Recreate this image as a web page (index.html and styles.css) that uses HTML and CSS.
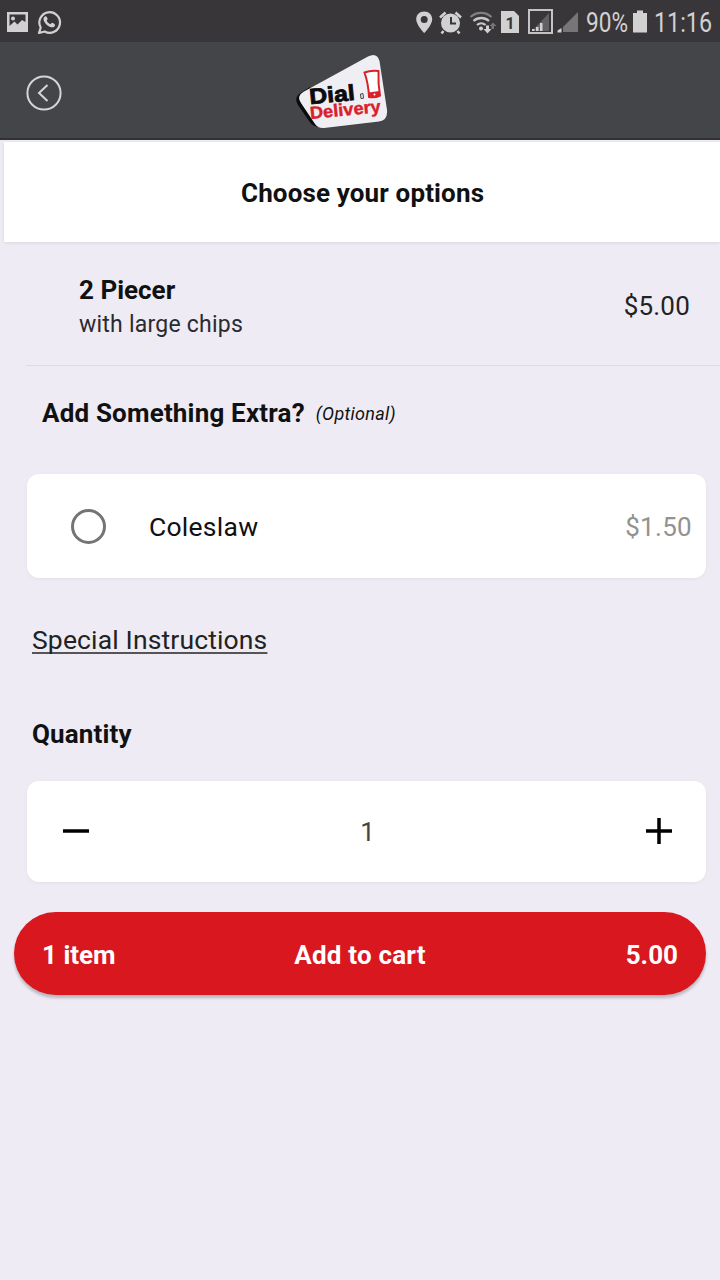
FILE: index.html
```html
<!DOCTYPE html>
<html lang="en">
<head>
<meta charset="utf-8">
<title>Choose your options</title>
<link rel="stylesheet" href="styles.css">
</head>
<body>
<div class="status">
  <svg class="notices" width="62" height="42" viewBox="0 0 62 42">
    <path fill="#d2d1d2" fill-rule="evenodd" d="M7 12h21v20H7zM9.500 14.500v11.500l5-4.500 3 3 4.500-4.500 3.500 2v-7.500z"/>
    <circle cx="13" cy="18.500" r="2" fill="#d2d1d2"/>
    <path d="M39 33l1.700-5.500a10.300 10.300 0 1 1 4 4z" fill="none" stroke="#d2d1d2" stroke-width="2.200" stroke-linejoin="round"/>
    <path d="M45 16.500c-3 1.500-1 6 2 8.500s7 3.500 8 .5c.5-1.300-1-2-3-2.800l-1.700 1.500c-1.600-.6-3-2-3.600-3.600l1-1.500c-.7-1.700-1.200-3.200-2.700-2.600z" fill="#d2d1d2"/>
  </svg>
  <svg class="signals" width="304" height="42" viewBox="416 0 304 42">
    <g fill="#d2d1d2">
      <path fill-rule="evenodd" d="M424.200 11.500c-4.600 0-8 3.400-8 7.700 0 5.800 8 13.800 8 13.800s8-8 8-13.800c0-4.300-3.400-7.700-8-7.700zm0 4.500a3.500 3.500 0 1 1 0 7 3.500 3.500 0 0 1 0-7z"/>
      <circle cx="450.500" cy="23" r="9.500"/>
      <path d="M440 17.500l5.500-5M461 17.500l-5.500-5M443.500 31l-2 2.500M457.500 31l2 2.500" stroke="#d2d1d2" stroke-width="2.500"/>
      <path d="M451 17v6.500h5" fill="none" stroke="#39363a" stroke-width="2"/>
      <path d="M501 11h13l5 5v17h-18z"/>
    </g>
    <g fill="none" stroke="#c8c7c8" stroke-width="2.300">
      <path d="M470.500 17c6-5.500 15-5.500 21 0" stroke="#807e81"/>
      <path d="M473.500 21c4.500-4 11-4 15.500 0M477 25c2.500-2.300 6-2.300 8.500 0"/>
    </g>
    <circle cx="481" cy="28.500" r="2" fill="#d2d1d2"/>
    <path d="M486 25.500h3v3.500h2.500l-4 4.500-4-4.500h2.500z" fill="#d2d1d2"/>
    <path d="M491.500 29v-3h-2l3.500-3.500 3.500 3.500H494v3z" fill="#777578"/>
    <text x="510" y="28.500" text-anchor="middle" class="sim">1</text>
    <rect x="529" y="10" width="23" height="23" fill="none" stroke="#c5c4c5" stroke-width="2"/>
    <path d="M532 31h17V13z" fill="#626063"/>
    <path d="M532 29h2.500v2H532zM536 27h2.500v4H536zM540 23h2.500v8H540z" fill="#d2d1d2"/>
    <path d="M563 32h15V12l-15 15z" fill="#777578"/>
    <path d="M557.500 32.500v-2l4-2.500v4.500z" fill="#d2d1d2"/>
    <text x="586" y="32" textLength="42" lengthAdjust="spacingAndGlyphs" class="clock">90%</text>
    <path d="M633 13h4v-2.500h6V13h4v19.500h-14z" fill="#d2d1d2"/>
    <text x="654" y="32" textLength="58" lengthAdjust="spacingAndGlyphs" class="clock">11:16</text>
  </svg>
</div>
<header class="topbar">
  <svg class="back" width="36" height="36" viewBox="0 0 36 36"><circle cx="18" cy="18" r="16.600"/><path d="M21.500 10l-8.500 8 8.500 8"/></svg>
  <svg class="logo" width="96" height="78" viewBox="294 53 96 78">
    <path d="M310 87L302 92Q293 97 298 105L309 121Q313 127 320 127z" fill="#0b0b0d"/>
    <path d="M304 91.500L368 56.500Q377 52 379.500 61L387 110Q388 120 379 121.500L324 128Q318 128.500 315 124L301 103Q296 96 304 91.500z" fill="#efeff3"/>
    <text transform="translate(310 104.300) rotate(-5.500)" textLength="45.500" lengthAdjust="spacingAndGlyphs" class="dial">Dial</text>
    <text transform="translate(310.500 119) rotate(-5.500)" textLength="71" lengthAdjust="spacingAndGlyphs" class="delivery">Delivery</text>
    <path d="M364.500 72.500Q371 70 378.500 71Q378 84 380 95.500Q375 98 369 97Q368.500 84 364.500 72.500z" fill="#fff" stroke="#d9202b" stroke-width="2"/>
    <path d="M368.500 92.500l11-1.500.5 5q-5 2.500-10.500 1z" fill="#d9202b"/>
    <circle cx="374.500" cy="94.500" r="1" fill="#fff"/>
    <path d="M360.500 94l2.500-.4.500 4.600-2.500.4z" fill="none" stroke="#444" stroke-width="1"/>
  </svg>
</header>
<h1 class="title">Choose your options</h1>
<section class="item">
  <div>
    <div class="name">2 Piecer</div>
    <div class="desc">with large chips</div>
  </div>
  <div class="price">$5.00</div>
</section>
<div class="extra"><span class="extra-title">Add Something Extra?</span><span class="optional">(Optional)</span></div>
<label class="card option">
  <span class="radio"></span>
  <span class="coleslaw">Coleslaw</span>
  <span class="option-price">$1.50</span>
</label>
<div class="special"><a class="link">Special Instructions</a></div>
<div class="quantity">Quantity</div>
<div class="card stepper">
  <svg width="28" height="28" viewBox="0 0 28 28"><path d="M1 14h26"/></svg>
  <span>1</span>
  <svg width="28" height="28" viewBox="0 0 28 28"><path d="M1 14h26M14 1v26"/></svg>
</div>
<div class="cart"><span class="count">1 item</span><span class="add">Add to cart</span><span class="total">5.00</span></div>
</body>
</html>
```
FILE: styles.css
```css
* { box-sizing: border-box; }
body {
  margin: 0;
  height: 1280px;
  background: #eeebf4;
  font-family: Roboto, "Liberation Sans", sans-serif;
  font-size: 26px;
  line-height: 32px;
  color: #111;
  display: flex;
  flex-direction: column;
  overflow: hidden;
}
svg { display: block; flex: none; }
.status {
  height: 42px;
  background: #39363a;
  display: flex;
  justify-content: space-between;
}
.clock { font-size: 27px; fill: #d2d1d2; }
.sim { font-size: 16px; font-weight: 700; fill: #39363a; }
.topbar {
  height: 98px;
  background: #434548;
  border-bottom: 2px solid #323234;
  display: flex;
  padding: 11px 0 0 26px;
}
.back { margin-top: 22px; fill: none; stroke: #d5d5d6; stroke-width: 2; }
.logo { margin-left: 232px; }
.dial {
  font: 700 22px "Liberation Sans", sans-serif;
  fill: #0b0b0d;
  stroke: #0b0b0d;
  stroke-width: 0.8;
}
.delivery {
  font: 700 17.5px "Liberation Sans", sans-serif;
  fill: #d9202b;
  stroke: #d9202b;
  stroke-width: 0.4;
}
.title {
  margin: 2px 0 0 4px;
  height: 100px;
  background: #fff;
  box-shadow: 0 1px 3px #d8d7da;
  font-size: 26px;
  font-weight: 700;
  letter-spacing: 0.14px;
  padding: 35px 0 0 237px;
}
.item {
  margin-left: 26px;
  height: 124px;
  border-bottom: 1px solid #dfdae3;
  padding: 32px 30px 0 53px;
  display: flex;
  justify-content: space-between;
}
.name { font-weight: 700; }
.desc { font-size: 23px; letter-spacing: 0.23px; color: #2b2a2e; margin-top: 3px; }
.price { margin-top: 16px; color: #222; letter-spacing: 0.2px; }
.extra { height: 108px; padding: 31px 0 0 42px; display: flex; gap: 11px; }
.extra-title { font-weight: 700; letter-spacing: 0.18px; }
.optional { font-size: 18px; font-style: italic; letter-spacing: 0.3px; padding-top: 1px; }
.card {
  margin: 0 14px 0 27px;
  background: #fff;
  border-radius: 12px;
  box-shadow: 0 1px 3px #e2e0e4;
  display: flex;
  align-items: center;
}
.option { height: 104px; padding: 1px 14px 0 44px; }
.radio { width: 35px; height: 35px; border: 3px solid #747474; border-radius: 50%; }
.coleslaw { margin-left: 43px; font-size: 26.5px; letter-spacing: 0.25px; padding-top: 1px; }
.option-price { margin-left: auto; color: #929292; letter-spacing: 0.3px; padding-top: 1px; }
.special { height: 94px; padding: 46px 0 0 32px; }
.link {
  display: inline-block;
  color: #222;
  font-size: 26.5px;
  letter-spacing: 0.14px;
  text-decoration: underline;
  text-decoration-color: #555;
  text-decoration-thickness: 2px;
  text-underline-offset: 3px;
  text-decoration-skip-ink: none;
}
.quantity { height: 109px; padding: 46px 0 0 32px; font-weight: 700; letter-spacing: 0.15px; }
.stepper {
  height: 101px;
  padding: 0 33px 0 35px;
  justify-content: space-between;
  color: #444;
}
.stepper svg { stroke: #000; stroke-width: 3.5; margin-top: -1px; }
.cart {
  margin: 30px 14px 0;
  height: 83px;
  border-radius: 42px;
  background: #d8181e;
  box-shadow: 0 3px 3px #b9b5bd;
  color: #fff;
  font-weight: 700;
  display: grid;
  grid-template-columns: 1fr auto 1fr;
  align-items: center;
  padding: 2px 28px 0;
}
.add { letter-spacing: 0.2px; }
.total { text-align: right; }
```
